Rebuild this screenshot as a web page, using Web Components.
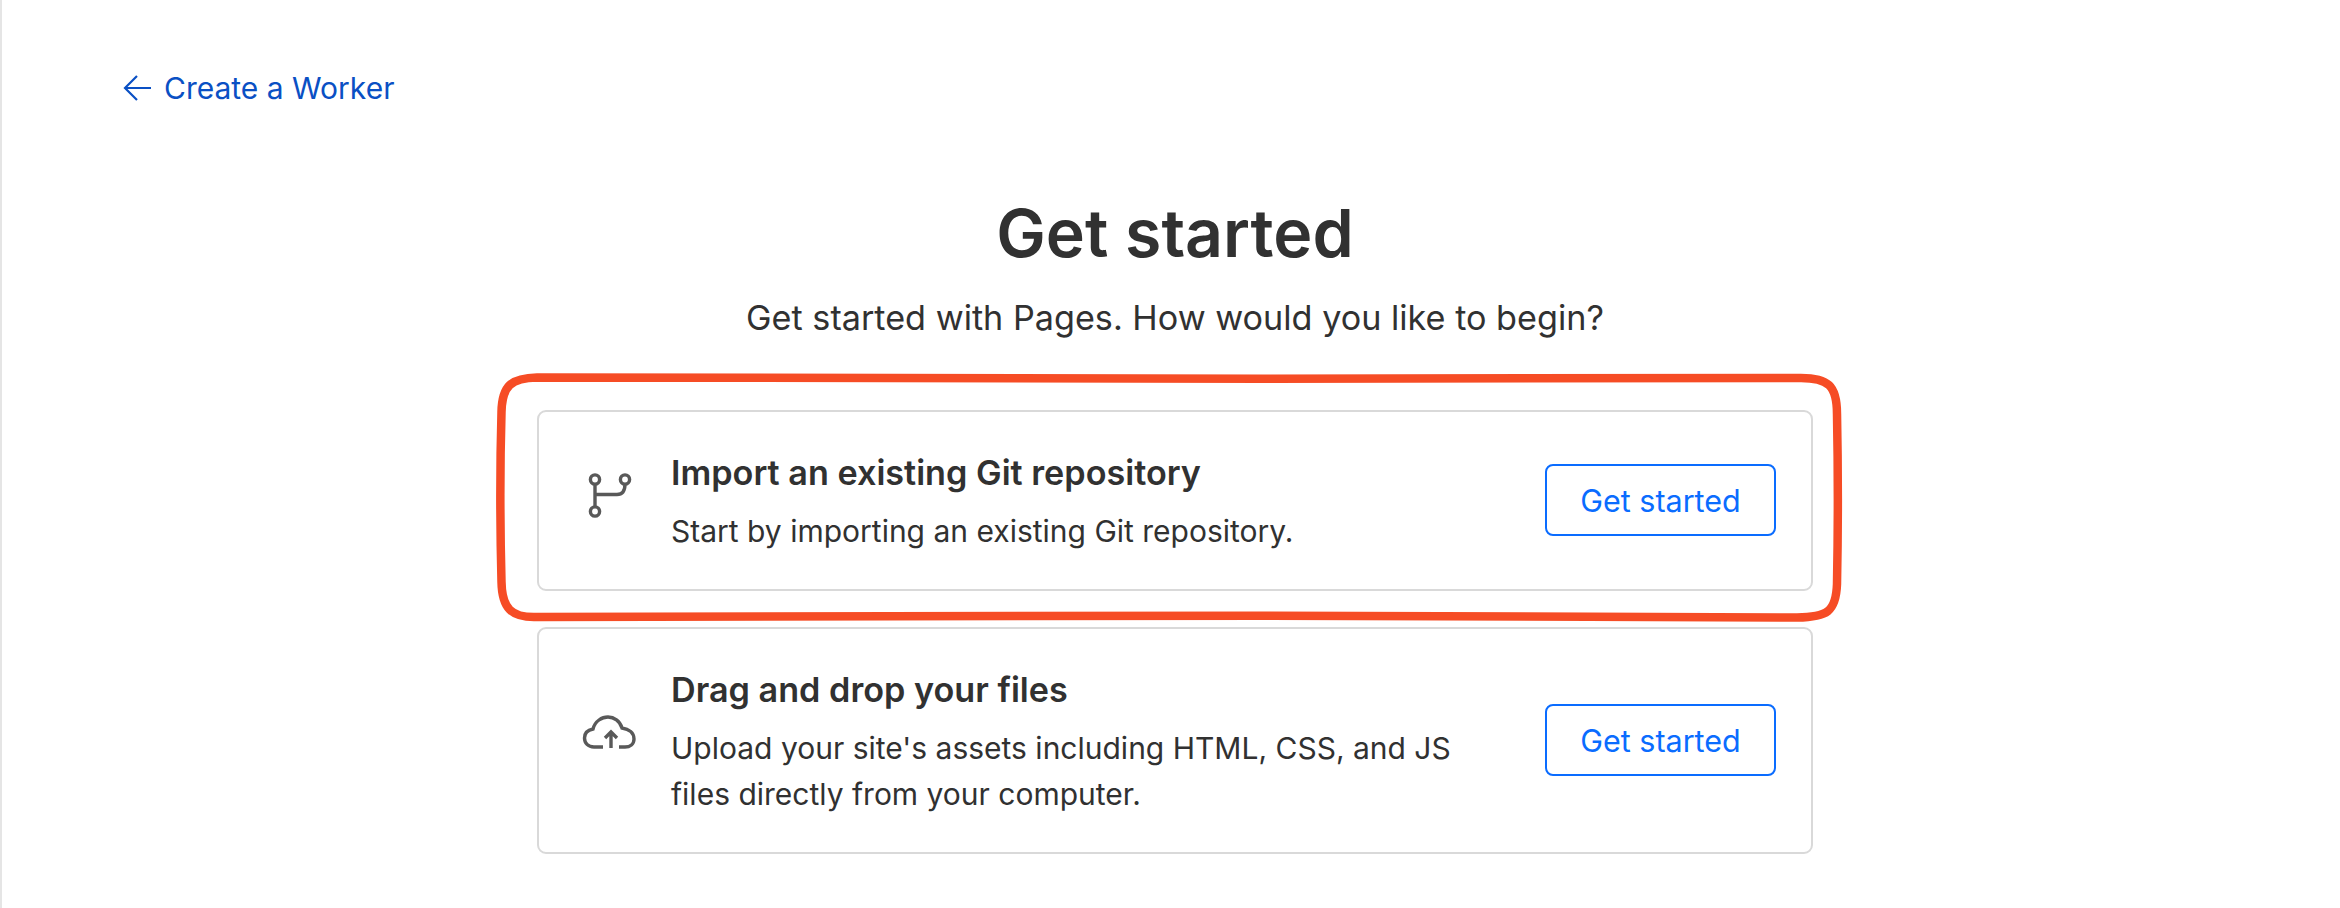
<!DOCTYPE html>
<html>
<head>
<meta charset="utf-8">
<title>Get started</title>
<style>
  html, body { margin: 0; height: 100%; background: #fff; }
  body { font-family: Inter, "Liberation Sans", sans-serif; color: #313131; }
</style>
</head>
<body>
<page-shell>
  <back-link slot="back">Create a Worker</back-link>
  <page-intro slot="intro" heading="Get started">Get started with Pages. How would you like to begin?</page-intro>
  <marked-area>
    <option-card heading="Import an existing Git repository" icon="git">Start by importing an existing Git repository.</option-card>
  </marked-area>
  <option-card heading="Drag and drop your files" icon="upload">Upload your site's assets including HTML, CSS, and JS files directly from your computer.</option-card>
</page-shell>

<script>
class PageShell extends HTMLElement {
  constructor() {
    super();
    this.attachShadow({ mode: 'open' });
    this.shadowRoot.innerHTML = `
      <style>
        :host {
          display: block;
          box-sizing: border-box;
          height: 908px;
          border-left: 2px solid #e5e5e5;
          padding: 64px 0 0 121px;
          overflow: hidden;
        }
        .cards {
          width: 1276px;
          margin-left: 414px;
          display: flex;
          flex-direction: column;
          gap: 36px;
        }
      </style>
      <slot name="back"></slot>
      <slot name="intro"></slot>
      <div class="cards"><slot></slot></div>
    `;
  }
}

class BackLink extends HTMLElement {
  constructor() {
    super();
    this.attachShadow({ mode: 'open' });
    this.shadowRoot.innerHTML = `
      <style>
        :host {
          display: flex;
          align-items: center;
          gap: 13px;
          height: 48px;
          color: #0a50c4;
          font-size: 30px;
        }
        svg { width: 28px; height: 28px; flex: none; }
      </style>
      <svg viewBox="0 0 28 28" fill="none" stroke="currentColor" stroke-width="2.2">
        <path d="M28 14H2M14 2 2 14l12 12"/>
      </svg>
      <span><slot></slot></span>
    `;
  }
}

class PageIntro extends HTMLElement {
  constructor() {
    super();
    this.attachShadow({ mode: 'open' });
    this.shadowRoot.innerHTML = `
      <style>
        :host {
          display: flex;
          flex-direction: column;
          align-items: center;
          width: 2104px;
          margin-top: 77px;
          height: 221px;
        }
        h1 { margin: 0; font-size: 66.2px; line-height: 88px; font-weight: 600; }
        p { margin: 21px 0 0; font-size: 34.2px; line-height: 40px; }
      </style>
      <h1></h1>
      <p><slot></slot></p>
    `;
    this.shadowRoot.querySelector('h1').textContent = this.getAttribute('heading');
  }
}

class MarkedArea extends HTMLElement {
  constructor() {
    super();
    this.attachShadow({ mode: 'open' });
    this.shadowRoot.innerHTML = `
      <style>
        :host { display: block; position: relative; }
        svg { position: absolute; left: -40px; top: -36px; width: 1346px; height: 252px; overflow: visible; pointer-events: none; }
      </style>
      <slot></slot>
      <svg viewBox="0 0 1346 252" fill="none" stroke="#f64c25" stroke-width="8.5">
        <path d="M40 3.500C400 5 900 5 1300 4 1332 3 1340 12 1340 40 1341 90 1341 160 1340 210 1339 238 1330 243 1300 243.500 900 241 400 241 40 243 14 244 5 234 4.500 208 3 150 3 90 4.500 38 5 12 14 4 40 3.500Z"/>
      </svg>
    `;
  }
}

const ICONS = {
  git: `<circle cx="20" cy="11.500" r="4.600"/><circle cx="50" cy="11.500" r="4.600"/><circle cx="20" cy="43.500" r="4.600"/>
        <path d="M20 16V39M20 26.500H42C47 26.500 50 23 50 16"/>`,
  upload: `<path d="M28 39H19C13 39 9.500 35 9.500 30 9.500 25 13 22 18 21 20 13 27 9 33 9 39 9 45 13 47 20 54 21 59 25 59 31 59 36 55 39 50 39H44"/>
        <path d="M36 40V24M30 30 36 24 42 30"/>`
};

class OptionCard extends HTMLElement {
  constructor() {
    super();
    this.attachShadow({ mode: 'open' });
    this.shadowRoot.innerHTML = `
      <style>
        :host {
          display: flex;
          align-items: center;
          box-sizing: border-box;
          width: 1276px;
          border: 2px solid #d9d9d9;
          border-radius: 9px;
          padding: 38px 35px 35px 36px;
        }
        .icon { width: 68px; height: 68px; flex: none; fill: none; stroke: #595959; stroke-width: 3.4; }
        .text { flex: 1; margin-left: 28px; max-width: 800px; }
        h2 { margin: 0; font-size: 34.2px; line-height: 46px; font-weight: 600; }
        p { margin: 12px 0 0; font-size: 30px; line-height: 46px; }
        .btn {
          margin: 0 0 4px auto;
          box-sizing: border-box;
          width: 231px;
          height: 72px;
          flex: none;
          display: flex;
          align-items: center;
          justify-content: center;
          border: 2px solid #0a6cff;
          border-radius: 8px;
          color: #0a6cff;
          font-size: 30.5px;
        }
      </style>
      <svg class="icon" viewBox="0 0 68 68">${ICONS[this.getAttribute('icon')]}</svg>
      <div class="text">
        <h2>${this.getAttribute('heading')}</h2>
        <p><slot></slot></p>
      </div>
      <div class="btn">Get started</div>
    `;
  }
}

customElements.define('page-shell', PageShell);
customElements.define('back-link', BackLink);
customElements.define('page-intro', PageIntro);
customElements.define('marked-area', MarkedArea);
customElements.define('option-card', OptionCard);
</script>
</body>
</html>
